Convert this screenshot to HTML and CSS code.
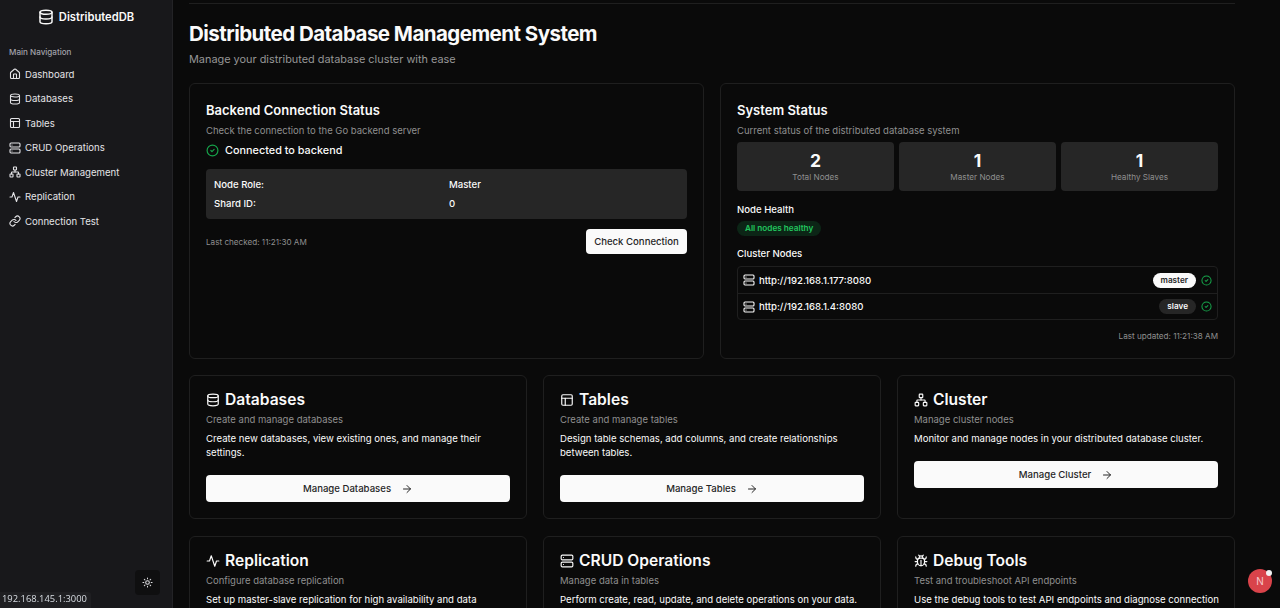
FILE: index.html
```html
<!DOCTYPE html>
<html lang="en">
<head>
    <meta charset="UTF-8">
    <meta name="viewport" content="width=device-width, initial-scale=1.0">
    <title>DistributedDB</title>
    <link rel="stylesheet" href="styles.css">
</head>
<body>
    <svg class="sprite" xmlns="http://www.w3.org/2000/svg">
        <symbol id="i-db" viewBox="0 0 24 24"><ellipse cx="12" cy="5" rx="9" ry="3"/><path d="M3 5v14a9 3 0 0 0 18 0V5"/><path d="M3 12a9 3 0 0 0 18 0"/></symbol>
        <symbol id="i-home" viewBox="0 0 24 24"><path d="M15 21v-8a1 1 0 0 0-1-1h-4a1 1 0 0 0-1 1v8"/><path d="M3 10a2 2 0 0 1 .709-1.528l7-5.999a2 2 0 0 1 2.582 0l7 5.999A2 2 0 0 1 21 10v9a2 2 0 0 1-2 2H5a2 2 0 0 1-2-2z"/></symbol>
        <symbol id="i-table" viewBox="0 0 24 24"><rect x="3" y="3" width="18" height="18" rx="2"/><path d="M3 9h18"/><path d="M9 21V9"/></symbol>
        <symbol id="i-server" viewBox="0 0 24 24"><rect x="2" y="2" width="20" height="8" rx="2"/><rect x="2" y="14" width="20" height="8" rx="2"/><path d="M6 6h.01"/><path d="M6 18h.01"/></symbol>
        <symbol id="i-network" viewBox="0 0 24 24"><rect x="16" y="16" width="6" height="6" rx="1"/><rect x="2" y="16" width="6" height="6" rx="1"/><rect x="9" y="2" width="6" height="6" rx="1"/><path d="M5 16v-3a1 1 0 0 1 1-1h12a1 1 0 0 1 1 1v3"/><path d="M12 12V8"/></symbol>
        <symbol id="i-activity" viewBox="0 0 24 24"><path d="M22 12h-4l-3 9L9 3l-3 9H2"/></symbol>
        <symbol id="i-link" viewBox="0 0 24 24"><path d="M10 13a5 5 0 0 0 7.54.54l3-3a5 5 0 0 0-7.07-7.07l-1.72 1.71"/><path d="M14 11a5 5 0 0 0-7.54-.54l-3 3a5 5 0 0 0 7.07 7.07l1.71-1.71"/></symbol>
        <symbol id="i-sun" viewBox="0 0 24 24"><circle cx="12" cy="12" r="4"/><path d="M12 2v2"/><path d="M12 20v2"/><path d="m4.93 4.93 1.41 1.41"/><path d="m17.66 17.66 1.41 1.41"/><path d="M2 12h2"/><path d="M20 12h2"/><path d="m6.34 17.66-1.41 1.41"/><path d="m19.07 4.93-1.41 1.41"/></symbol>
        <symbol id="i-check" viewBox="0 0 24 24"><circle cx="12" cy="12" r="10"/><path d="m9 12 2 2 4-4"/></symbol>
        <symbol id="i-arrow" viewBox="0 0 24 24"><path d="M5 12h14"/><path d="m12 5 7 7-7 7"/></symbol>
        <symbol id="i-bug" viewBox="0 0 24 24"><path d="m8 2 1.88 1.88"/><path d="M14.12 3.88 16 2"/><path d="M9 7.13v-1a3.003 3.003 0 1 1 6 0v1"/><path d="M12 20c-3.3 0-6-2.7-6-6v-3a4 4 0 0 1 4-4h4a4 4 0 0 1 4 4v3c0 3.3-2.7 6-6 6"/><path d="M12 20v-9"/><path d="M6.53 9C4.6 8.8 3 7.1 3 5"/><path d="M6 13H2"/><path d="M3 21c0-2.1 1.7-3.9 3.8-4"/><path d="M20.97 5c0 2.1-1.6 3.8-3.5 4"/><path d="M22 13h-4"/><path d="M17.2 17c2.1.1 3.8 1.9 3.8 4"/></symbol>
    </svg>

    <div class="app">
        <aside class="sidebar">
            <div class="brand">
                <svg class="icon brand-icon"><use href="#i-db"/></svg>
                <span>DistributedDB</span>
            </div>
            <div class="nav-label">Main Navigation</div>
            <nav class="nav">
                <a class="nav-item"><svg class="icon"><use href="#i-home"/></svg>Dashboard</a>
                <a class="nav-item"><svg class="icon"><use href="#i-db"/></svg>Databases</a>
                <a class="nav-item"><svg class="icon"><use href="#i-table"/></svg>Tables</a>
                <a class="nav-item"><svg class="icon"><use href="#i-server"/></svg>CRUD Operations</a>
                <a class="nav-item"><svg class="icon"><use href="#i-network"/></svg>Cluster Management</a>
                <a class="nav-item"><svg class="icon"><use href="#i-activity"/></svg>Replication</a>
                <a class="nav-item"><svg class="icon"><use href="#i-link"/></svg>Connection Test</a>
            </nav>
            <div class="sidebar-foot">
                <button class="theme-btn"><svg class="icon"><use href="#i-sun"/></svg></button>
            </div>
        </aside>

        <main class="main">
            <div class="top-rule"></div>
            <h1>Distributed Database Management System</h1>
            <p class="lead">Manage your distributed database cluster with ease</p>

            <div class="grid-two">
                <section class="card">
                    <h2>Backend Connection Status</h2>
                    <p class="sub">Check the connection to the Go backend server</p>
                    <div class="connected"><svg class="icon ok"><use href="#i-check"/></svg>Connected to backend</div>
                    <div class="info-box">
                        <span>Node Role:</span><span>Master</span>
                        <span>Shard ID:</span><span>0</span>
                    </div>
                    <div class="check-row">
                        <span class="small">Last checked: 11:21:30 AM</span>
                        <button class="btn btn-check">Check Connection</button>
                    </div>
                </section>

                <section class="card">
                    <h2>System Status</h2>
                    <p class="sub">Current status of the distributed database system</p>
                    <div class="stats">
                        <div class="stat"><strong>2</strong><span>Total Nodes</span></div>
                        <div class="stat"><strong>1</strong><span>Master Nodes</span></div>
                        <div class="stat"><strong>1</strong><span>Healthy Slaves</span></div>
                    </div>
                    <h3>Node Health</h3>
                    <span class="health">All nodes healthy</span>
                    <h3>Cluster Nodes</h3>
                    <div class="node-list">
                        <div class="node">
                            <svg class="icon"><use href="#i-server"/></svg>
                            <span class="url">http://192.168.1.177:8080</span>
                            <span class="pill pill-master">master</span>
                            <svg class="icon ok"><use href="#i-check"/></svg>
                        </div>
                        <div class="node">
                            <svg class="icon"><use href="#i-server"/></svg>
                            <span class="url">http://192.168.1.4:8080</span>
                            <span class="pill pill-slave">slave</span>
                            <svg class="icon ok"><use href="#i-check"/></svg>
                        </div>
                    </div>
                    <div class="small updated">Last updated: 11:21:38 AM</div>
                </section>
            </div>

            <div class="grid-three">
                <section class="card feature">
                    <h2><svg class="icon"><use href="#i-db"/></svg>Databases</h2>
                    <p class="sub">Create and manage databases</p>
                    <p class="body">Create new databases, view existing ones, and manage their settings.</p>
                    <button class="btn btn-wide">Manage Databases<svg class="icon"><use href="#i-arrow"/></svg></button>
                </section>
                <section class="card feature">
                    <h2><svg class="icon"><use href="#i-table"/></svg>Tables</h2>
                    <p class="sub">Create and manage tables</p>
                    <p class="body">Design table schemas, add columns, and create relationships between tables.</p>
                    <button class="btn btn-wide">Manage Tables<svg class="icon"><use href="#i-arrow"/></svg></button>
                </section>
                <section class="card feature">
                    <h2><svg class="icon"><use href="#i-network"/></svg>Cluster</h2>
                    <p class="sub">Manage cluster nodes</p>
                    <p class="body">Monitor and manage nodes in your distributed database cluster.</p>
                    <button class="btn btn-wide">Manage Cluster<svg class="icon"><use href="#i-arrow"/></svg></button>
                </section>
                <section class="card feature">
                    <h2><svg class="icon"><use href="#i-activity"/></svg>Replication</h2>
                    <p class="sub">Configure database replication</p>
                    <p class="body one-line">Set up master-slave replication for high availability and data</p>
                </section>
                <section class="card feature">
                    <h2><svg class="icon"><use href="#i-server"/></svg>CRUD Operations</h2>
                    <p class="sub">Manage data in tables</p>
                    <p class="body one-line">Perform create, read, update, and delete operations on your data.</p>
                </section>
                <section class="card feature">
                    <h2><svg class="icon"><use href="#i-bug"/></svg>Debug Tools</h2>
                    <p class="sub">Test and troubleshoot API endpoints</p>
                    <p class="body one-line">Use the debug tools to test API endpoints and diagnose connection</p>
                </section>
            </div>
        </main>
    </div>

    <div class="status-url">192.168.145.1:3000</div>
    <div class="dev-badge">N<span class="dev-dot"></span></div>
</body>
</html>
```

FILE: styles.css
```css
* {
    box-sizing: border-box;
}
html, body {
    height: 100%;
}
body {
    margin: 0;
    overflow: hidden;
    background: #0a0a0a;
    color: #fafafa;
    font-family: Inter, "Liberation Sans", sans-serif;
    font-size: 9.6px;
}
h1, h2, h3, p {
    margin: 0;
}
.sprite {
    display: none;
}
.icon {
    width: 11px;
    height: 11px;
    flex: none;
    fill: none;
    stroke: currentColor;
    stroke-width: 2.2;
    stroke-linecap: round;
    stroke-linejoin: round;
}
.ok {
    color: #16a34a;
}
.app {
    display: flex;
    height: 608px;
    overflow: hidden;
}

/* sidebar */
.sidebar {
    width: 173px;
    flex: none;
    display: flex;
    flex-direction: column;
    background: #18181b;
    border-right: 1px solid #232326;
    padding: 0 9px;
}
.brand {
    display: flex;
    align-items: center;
    justify-content: center;
    gap: 5px;
    height: 34px;
    font-size: 11.2px;
    font-weight: 600;
}
.brand-icon {
    width: 16px;
    height: 16px;
}
.nav-label {
    margin-top: 12px;
    font-size: 8.1px;
    font-weight: 500;
    line-height: 12px;
    color: #a1a1aa;
}
.nav {
    margin-top: 4px;
    display: flex;
    flex-direction: column;
}
.nav-item {
    display: flex;
    align-items: center;
    gap: 4px;
    height: 24.5px;
    font-size: 9.6px;
    color: #e4e4e7;
}
.nav-item .icon {
    width: 12px;
    height: 12px;
}
.sidebar-foot {
    margin-top: auto;
    display: flex;
    justify-content: flex-end;
    padding: 0 3px 13px 0;
}
.theme-btn {
    width: 25px;
    height: 25px;
    display: flex;
    align-items: center;
    justify-content: center;
    background: #0f0f10;
    border: 0;
    border-radius: 4px;
    color: #e4e4e7;
    padding: 0;
}

/* main */
.main {
    flex: 1;
    min-width: 0;
    padding: 0 45px 0 16px;
}
.top-rule {
    height: 4px;
    border-bottom: 1px solid #1f1f1f;
}
h1 {
    margin-top: 16px;
    font-size: 20.5px;
    font-weight: 700;
    line-height: 27px;
    letter-spacing: -0.54px;
}
.lead {
    margin-top: 5px;
    font-size: 10.9px;
    line-height: 15px;
    color: #969696;
}
.grid-two {
    display: grid;
    grid-template-columns: repeat(2, minmax(0, 1fr));
    gap: 16px;
    margin-top: 16px;
}
.grid-three {
    display: grid;
    grid-template-columns: repeat(3, minmax(0, 1fr));
    gap: 16px;
    margin-top: 16px;
    row-gap: 17px;
}
.card {
    background: #0a0a0a;
    border: 1px solid #1f1f1f;
    border-radius: 6px;
    padding: 17px 16px 16px;
}
.card h2 {
    font-size: 13px;
    font-weight: 600;
    line-height: 18px;
}
.sub {
    margin-top: 5px;
    font-size: 9.5px;
    line-height: 14px;
    color: #8f8f8f;
}
.small {
    font-size: 8.15px;
    color: #8f8f8f;
}

/* backend card */
.connected {
    display: flex;
    align-items: center;
    gap: 6px;
    margin-top: 2px;
    font-size: 10.85px;
    font-weight: 500;
    line-height: 20px;
}
.connected .icon {
    width: 13px;
    height: 13px;
}
.info-box {
    display: grid;
    grid-template-columns: 1fr 1fr;
    column-gap: 5px;
    row-gap: 5px;
    margin-top: 9px;
    padding: 8.5px 8px;
    background: #262626;
    border-radius: 4px;
    font-weight: 500;
    line-height: 14px;
}
.check-row {
    display: flex;
    align-items: center;
    justify-content: space-between;
    margin-top: 10px;
}
.btn {
    display: flex;
    align-items: center;
    justify-content: center;
    background: #fafafa;
    color: #262626;
    border: 0;
    border-radius: 4px;
    font-family: inherit;
    font-size: 9.6px;
    font-weight: 500;
}
.btn-check {
    width: 101px;
    height: 25px;
    padding: 0;
}

/* system card */
.stats {
    display: grid;
    grid-template-columns: repeat(3, 1fr);
    gap: 5px;
    margin-top: 4px;
}
.stat {
    display: flex;
    flex-direction: column;
    align-items: center;
    height: 49px;
    padding-top: 8px;
    background: #262626;
    border-radius: 4px;
}
.stat strong {
    font-size: 17.5px;
    font-weight: 700;
    line-height: 21px;
}
.stat span {
    font-size: 8.2px;
    line-height: 13px;
    color: #8f8f8f;
}
h3 {
    margin-top: 11px;
    font-size: 9.6px;
    font-weight: 500;
    line-height: 14px;
}
.stats + h3 {
    margin-top: 12px;
}
.health {
    display: block;
    width: fit-content;
    margin-top: 4px;
    padding: 0 8px;
    height: 15px;
    line-height: 15px;
    border-radius: 8px;
    background: #0c2516;
    color: #22c55e;
    font-size: 8.2px;
    font-weight: 600;
}
.node-list {
    margin-top: 5px;
    border: 1px solid #1f1f1f;
    border-radius: 4px;
}
.node {
    display: flex;
    align-items: center;
    gap: 4px;
    height: 26px;
    padding: 0 5px;
}
.node + .node {
    border-top: 1px solid #1f1f1f;
}
.node > .icon:first-child {
    width: 12px;
    height: 12px;
}
.url {
    flex: 1;
    font-weight: 500;
}
.pill {
    height: 15px;
    line-height: 15px;
    padding: 0 8px;
    margin-right: 1px;
    border-radius: 8px;
    font-size: 8.2px;
    font-weight: 600;
}
.pill-master {
    background: #fafafa;
    color: #262626;
}
.pill-slave {
    background: #262626;
    color: #fafafa;
}
.updated {
    margin-top: 10px;
    text-align: right;
    line-height: 12px;
}

/* feature cards */
.feature {
    display: flex;
    flex-direction: column;
    height: 144px;
}
.feature h2 {
    display: flex;
    align-items: center;
    gap: 5px;
    font-size: 15.6px;
    line-height: 22px;
    margin-top: -4px;
}
.feature h2 .icon {
    width: 14px;
    height: 14px;
    stroke-width: 2;
}
.feature .sub {
    margin-top: 2px;
}
.body {
    margin-top: 5px;
    line-height: 14px;
}
.one-line {
    white-space: nowrap;
}
.btn-wide {
    flex: none;
    height: 27px;
    margin-top: 15px;
    gap: 10px;
    padding: 0;
    width: 100%;
}
.btn-wide .icon {
    width: 12px;
    height: 12px;
    stroke-width: 2;
}

/* things lying over the page */
.status-url {
    position: fixed;
    left: 0;
    bottom: 0;
    padding: 0 4px 0 2px;
    height: 16px;
    line-height: 13px;
    background: #1f1f22;
    color: #d8dde3;
    font-family: "Open Sans", "Liberation Sans", sans-serif;
    font-size: 9.4px;
    border-radius: 0 3px 0 0;
}
.dev-badge {
    position: fixed;
    left: 1248px;
    top: 569px;
    width: 24px;
    height: 24px;
    border-radius: 50%;
    background: #d9434a;
    color: #f6c9cb;
    font-size: 10px;
    line-height: 24px;
    text-align: center;
}
.dev-dot {
    position: absolute;
    right: 0;
    top: 1px;
    width: 6px;
    height: 6px;
    border-radius: 50%;
    background: #f2f2f2;
}
```
